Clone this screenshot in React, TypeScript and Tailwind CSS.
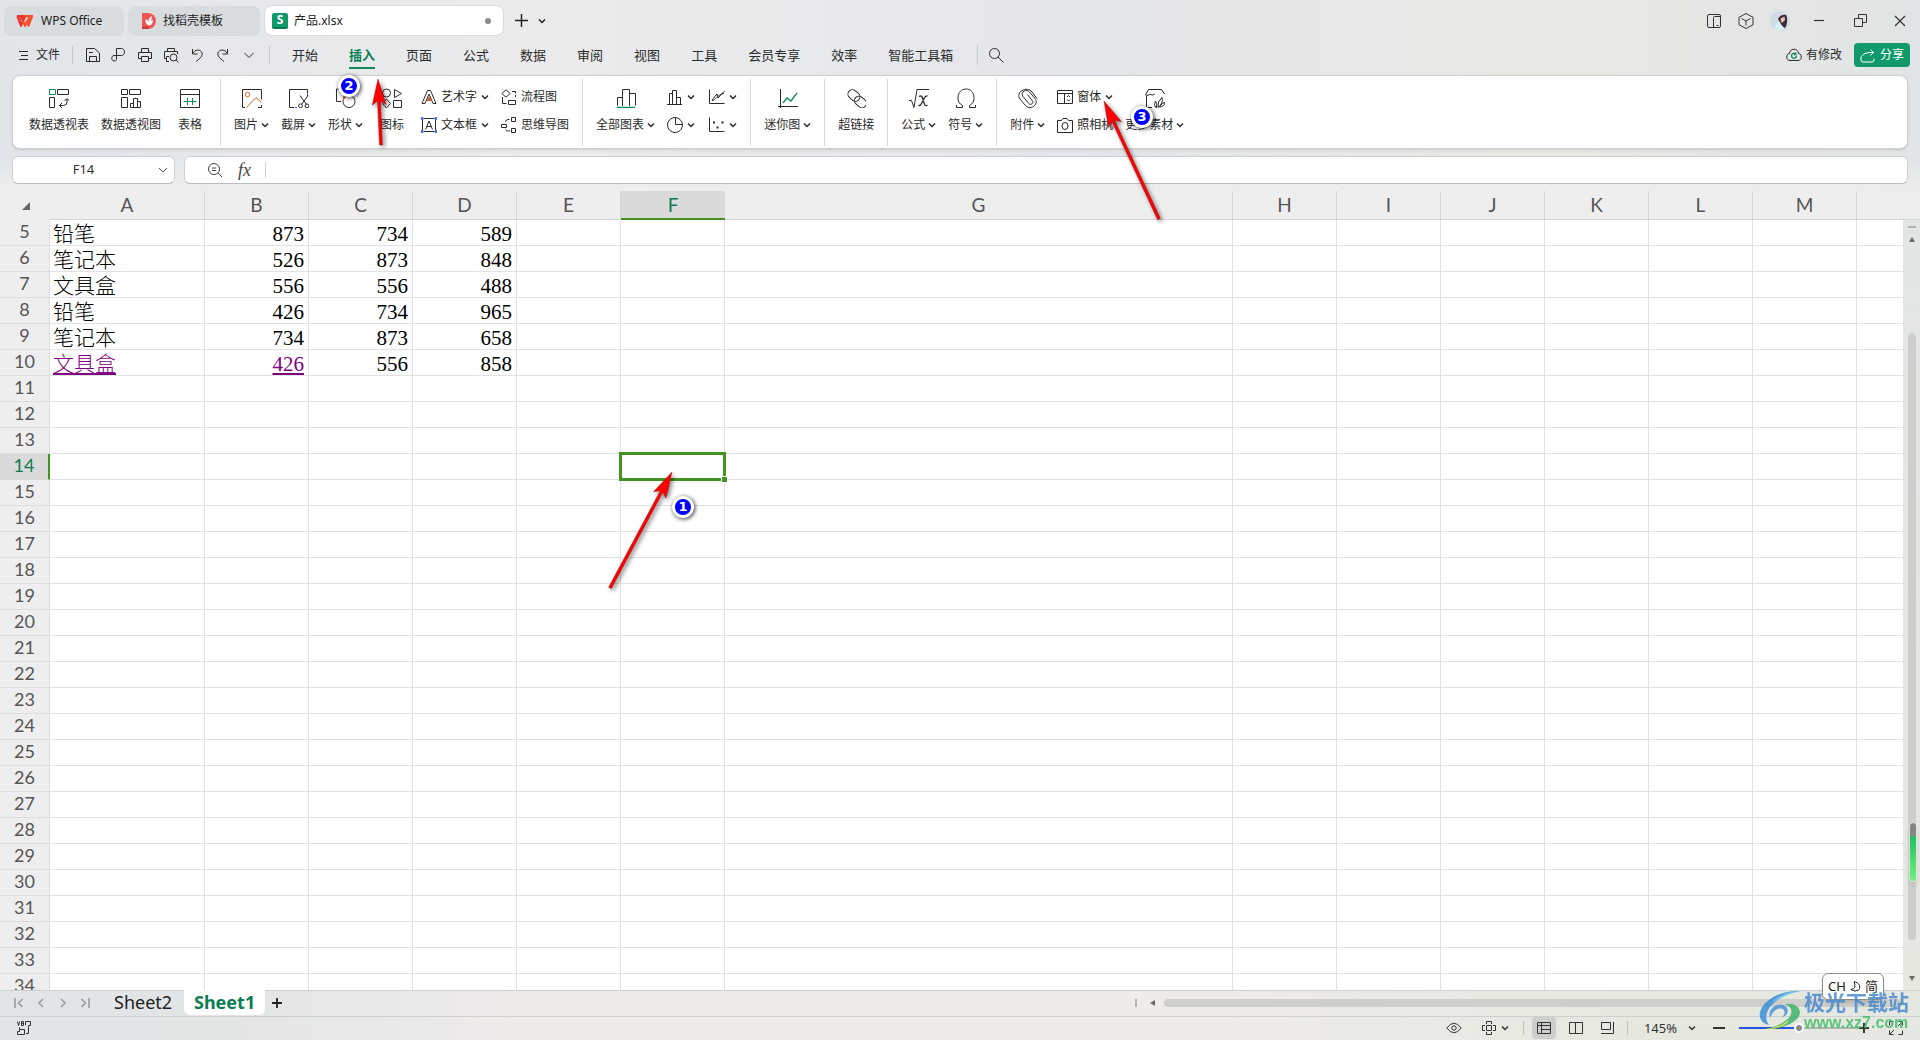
import { useState } from "react";
import type { ReactNode } from "react";

type IconProps = { size?: number; box?: number; className?: string; children: ReactNode };

function Icon({ size = 20, box = size, className = "", children }: IconProps) {
  return (
    <svg
      width={size}
      height={size}
      viewBox={`0 0 ${box} ${box}`}
      fill="none"
      stroke="currentColor"
      className={`shrink-0 ${className}`}
      aria-hidden="true"
    >
      {children}
    </svg>
  );
}

function Chevron() {
  return (
    <svg width="8" height="6" viewBox="0 0 8 6" fill="none" stroke="currentColor" strokeWidth="1.5" className="shrink-0" aria-hidden="true">
      <path d="M1 1.5l3 3 3-3" />
    </svg>
  );
}

const GREEN = "#0f8a5f";
const ORANGE = "#d0602c";
const BLUE = "#2a56dd";

const icons = {
  pivotTable: (
    <Icon>
      <path d="M8.5 1.5h11v5h-11zM.5 9.5h5v10h-5z" />
      <path d="M.5 1.5h6v5h-6z" stroke={GREEN} />
      <path d="M10.5 17.5h4q3.5 0 3.5-3.5v-3M13 15l-2.5 2.5L13 20M15.5 13L18 10.500l2.500 2.500" />
    </Icon>
  ),
  pivotChart: (
    <Icon>
      <path d="M.5 1.500h6v5h-6zM8.500 1.500h11v5h-11zM.5 9.500h6v10h-6zM9.500 19.500v-4h3v4M12.500 19.500v-9h4v9M16.500 13.500h3v6h-10" />
    </Icon>
  ),
  table: (
    <Icon>
      <path d="M.5 1.500h19v18H.5zM.5 6.500h19" />
      <path d="M3.500 13.500h13M7.500 10v7M12.500 10v7" stroke={GREEN} />
    </Icon>
  ),
  picture: (
    <Icon>
      <path d="M3 19.500H.5v-18h19v10M16 19.500h3.500V17" />
      <circle cx="5.500" cy="6.500" r="2.200" stroke={ORANGE} />
      <path d="M4.500 19.500L14 9.500l5.500 5" stroke={ORANGE} />
    </Icon>
  ),
  capture: (
    <Icon>
      <path d="M5 19.500H.5v-18h18v4" />
      <path d="M18.500 5.500v3M6 19.500h2" stroke={BLUE} />
      <path d="M11 7.500l6.500 9M19 7.500l-6.500 9" />
      <circle cx="11.500" cy="17.800" r="1.900" />
      <circle cx="18" cy="17.800" r="1.900" />
    </Icon>
  ),
  shapes: (
    <Icon>
      <path d="M5 13.500H.5V1H13" />
      <circle cx="13" cy="13.500" r="6" />
      <path d="M7.500 13V8.500h5" stroke={ORANGE} />
    </Icon>
  ),
  glyphs: (
    <Icon>
      <circle cx="4.500" cy="5" r="4" />
      <path d="M12.500 1.500l7 4-7 4zM4.500 11l4 4.500-4 4.500-4-4.500zM11.500 12.500h8v7h-8z" />
    </Icon>
  ),
  wordArt: (
    <Icon size={16}>
      <path d="M1 14.500L6.500 1.500h3L15 14.500h-3L8 5 4 14.500z" />
      <path d="M5.500 12L8 7l2.500 5z" fill={ORANGE} stroke="none" />
    </Icon>
  ),
  textBox: (
    <Icon size={16}>
      <path d="M3 1.500h10M3 14.500h10M1.500 3v10M14.500 3v10M4.500 12.500L8 4l3.500 8.500M5.700 9.500h4.600" />
      <path d="M0 1.500h2.500M0 14.500h2.500M13.500 1.500H16M13.500 14.500H16" stroke={BLUE} strokeWidth="2.500" />
    </Icon>
  ),
  flowChart: (
    <Icon size={16}>
      <path d="M5 .8L9.200 4.500 5 8.200.8 4.500zM1.500 8v6.500h4M11 2.500h3.500v2M14.500 6v2" />
      <path d="M7.500 11.500h7v4h-7z" />
    </Icon>
  ),
  mindMap: (
    <Icon size={16}>
      <path d="M.5 7.500h5v3h-5zM10.500.5h4v4h-4zM10.500 11.500h4v4h-4zM8.500 2.500H7Q5 2.500 4.500 5M4.500 12.500q.5 1.500 2.500 1.500h2" />
    </Icon>
  ),
  allCharts: (
    <Icon>
      <path d="M1.500 17.500v-8h5M6.500 18V1.500h7V18M13.500 5.500h6v12" />
      <path d="M1 19.500h18" stroke={GREEN} strokeWidth="1.500" />
    </Icon>
  ),
  barChart: (
    <Icon size={16}>
      <path d="M0 15.500h15M2.500 15V4.500h3M5.500 15V1.500h4V15M9.500 8.500h4V15" />
    </Icon>
  ),
  lineChart: (
    <Icon size={16}>
      <path d="M.5.5v14h15M3 11l5-6 1 4 6.500-7M3 11.500c4 0 5-6 12-7" />
    </Icon>
  ),
  pieChart: (
    <Icon size={16}>
      <circle cx="8" cy="8" r="7.500" />
      <path d="M8.500.5v7h7" />
    </Icon>
  ),
  scatter: (
    <Icon size={16}>
      <path d="M.5.5v14h15" />
      <path d="M4 5.500h2M7.500 10.500h2M12.500 5.500h2" strokeWidth="2" />
    </Icon>
  ),
  sparkline: (
    <Icon>
      <path d="M2.500 1v20M0 18.500h20" />
      <path d="M5 15l4-5 4 3 6-8" stroke={GREEN} strokeWidth="1.300" />
    </Icon>
  ),
  link: (
    <Icon>
      <rect x="-3" y="-5" width="13" height="9" rx="4.500" transform="translate(5 5.500) rotate(42)" />
      <rect x="-3" y="-5" width="13" height="9" rx="4.500" transform="translate(11.500 12) rotate(42)" />
    </Icon>
  ),
  formula: (
    <Icon>
      <path d="M0 12.500h2.500l2.500 7 3-18h12" />
      <path d="M10 8.500q2.500-1.500 3.500 1.500l2 6.500q1 2 3 .5M18.500 8q-2-.5-4 3.500l-2 4q-1.500 3-3 1.500" strokeWidth="1.300" />
    </Icon>
  ),
  omega: (
    <Icon>
      <path d="M.5 17v2.500h6v-2A9 8.500 0 0 1 2 9.500C2 4.500 5.500 1 10 1s8 3.500 8 8.500a9 8.500 0 0 1-4.500 8v2h6V17" />
    </Icon>
  ),
  clip: (
    <Icon>
      <path d="M19 10.500l-5-6.500C11.500 1 7.500.5 4 2.500.5 4.500 0 8 2 11l5 6c2 2.500 5.500 3.500 8.500 1.500s3.500-5.500 1.500-8L11.500 4c-1.500-1.500-3.500-2-5.500-.8S3.500 6.500 5 8.500l5.500 6.700c1 1.300 2.500 1.500 3.500.6s1.200-2 .2-3.300L9.500 6.500" />
    </Icon>
  ),
  form: (
    <Icon size={16}>
      <path d="M.5 1.500h15v13H.5zM.5 4.500h15M7.500 4.500v10M10 8l1.500-1.500L13 8M10 10.500l1.500 1.500 1.500-1.500" />
    </Icon>
  ),
  camera: (
    <Icon size={16}>
      <path d="M.5 3.500h4l1.500-2h4l1.500 2h4v12H.5z" />
      <ellipse cx="8" cy="9" rx="3" ry="3.500" />
    </Icon>
  ),
  more: (
    <Icon>
      <path d="M7 19.500H1.500V8M.5 7L3.500 1.500h13L19.500 6M.5 7q2.500 1.500 4.500-1 2 2.500 4.500 0" />
      <path d="M10.500 19.500q-2-2.500 0-6.500 2 2 1 6.500zM13 19.500q-1-6 4-10 1.500 6-4 10zM14.500 19q3-5 5.500-4.500-.5 4-5.500 4.500z" />
    </Icon>
  ),
};

function BigButton({ icon, label, menu }: { icon: ReactNode; label: string; menu?: boolean }) {
  return (
    <button className="flex min-w-[46px] flex-col items-center gap-2 px-[6px] pt-[12px] text-[#2b2b2b]">
      {icon}
      <span className="flex items-center gap-[3px] text-xs leading-[18px] whitespace-nowrap">
        {label}
        {menu && <Chevron />}
      </span>
    </button>
  );
}

function SmallButton({ icon, label, menu, name }: { icon: ReactNode; label?: string; menu?: boolean; name?: string }) {
  return (
    <button className="flex h-4 items-center gap-1 text-xs leading-4 whitespace-nowrap text-[#2b2b2b]" aria-label={name}>
      {icon}
      {label}
      {menu && <Chevron />}
    </button>
  );
}

function Divider() {
  return <div className="mx-[7px] mt-[3px] h-[67px] w-px bg-[#d5d7d9]" />;
}

function TitleBar() {
  return (
    <header className="flex h-[41px] items-center pl-1 text-xs text-[#222]">
      <button className="flex h-[30px] w-[120px] items-center gap-2 rounded-lg bg-[#d9dcdf] pl-3">
        <svg width="17" height="12" viewBox="0 0 17 12" fill="none" strokeWidth="2.400" aria-hidden="true">
          <path d="M1 1.200h5l-1 4M1.500 1.200l3.500 9 4-9h-3" stroke="#f0302c" />
          <path d="M7 6l2 4.300 5.500-9M9 1.200h7l-3.500 9-2-4" stroke="#f4502e" />
        </svg>
        WPS Office
      </button>
      <button className="ml-1 flex h-[30px] w-[132px] items-center gap-[7px] rounded-lg bg-[#d9dcdf] pl-[14px]">
        <svg width="14" height="16" viewBox="0 0 14 16" aria-hidden="true">
          <path d="M0 0h6a7.500 7.500 0 0 1 0 16H0z" fill="#f25555" />
          <path d="M0 13.500h8L6 16H0z" fill="#c93d3d" />
          <path d="M7 12.500C3.500 11 3 8 4 6c1.500 1 2.200 2 2.500 3 0-2.500.5-4.500 3-6 .5 2 .2 3.500-.8 5 .8-.6 1.300-.8 2.300-.8 0 3-1.500 5-4 5.300z" fill="#fff" />
        </svg>
        找稻壳模板
      </button>
      <div className="ml-1 flex h-[31px] w-[240px] items-center rounded-lg border border-[#d8dadc] bg-white pr-3 pl-[7px]">
        <span className="flex h-4 w-4 items-center justify-center rounded-xs border-b-2 border-[#0b7a50] bg-[#12996b] text-xs font-bold text-white">
          S
        </span>
        <span className="ml-[6px] flex-1">产品.xlsx</span>
        <span className="h-[6px] w-[6px] rounded-full bg-[#8c8c8c]" />
      </div>
      <button className="ml-[10px]" aria-label="新建">
        <Icon size={15}><path d="M7.500 1v13M1 7.500h13" strokeWidth="1.500" /></Icon>
      </button>
      <button className="ml-[9px]" aria-label="标签列表"><Chevron /></button>
      <div className="ml-auto flex h-full items-center text-[#333]">
        <button className="flex w-8 justify-center" aria-label="分屏">
          <Icon size={16}>
            <rect x="1.500" y="1.500" width="13" height="13" rx="1.500" />
            <path d="M7.500 13V4.500q0-1 1-1h6M7.500 13v1.500M10.500 12.500h2" />
          </Icon>
        </button>
        <button className="flex w-8 justify-center" aria-label="应用中心">
          <Icon size={16}><path d="M8 .5l7 3.800v7.400l-7 3.800-7-3.800V4.300zM3.500 5.500L8 8l4.500-2.500M8 8v4.500" /></Icon>
        </button>
        <button className="flex w-9 justify-center" aria-label="账号">
          <svg width="20" height="20" viewBox="0 0 20 20" aria-hidden="true">
            <circle cx="10" cy="10" r="10" fill="#cfdae4" />
            <path d="M5 18c-1-4 1-7 5-7l4 7q-4 3-9 0z" fill="#dbeef5" />
            <path d="M8 8q3-5 8-4 1.500 2 1 7-.5 5-2.500 6l-3-3z" fill="#3b2a33" />
            <path d="M10.500 7.500l4-2 .5 3.500-3 3q-1.500-2-1.500-4.500z" fill="#e9c3b6" />
          </svg>
        </button>
        <button className="flex w-[42px] justify-center" aria-label="最小化">
          <Icon size={12}><path d="M1 5.500h10" strokeWidth="1.200" /></Icon>
        </button>
        <button className="flex w-10 justify-center" aria-label="还原">
          <Icon size={13}><path d="M.5 4.500h8v8h-8zM4.500 4V.5h8v8H9" /></Icon>
        </button>
        <button className="flex w-10 justify-center" aria-label="关闭">
          <Icon size={12}><path d="M1 1l10 10M11 1L1 11" strokeWidth="1.200" /></Icon>
        </button>
      </div>
    </header>
  );
}

const quickTools = [
  { name: "保存", icon: <path d="M1.500 1.500h8l5 4.500v8.500h-13zM4.500 14v-4.500h7V14M4 5.500h4" /> },
  { name: "输出为PDF", icon: <path d="M5.500 11V1.500h5c4 0 4 7 0 7H3c-3 0-3 5.500 0 5.500 2.500 0 2.500-1 2.500-3" /> },
  { name: "打印", icon: <path d="M4.500 5V1.500h7V5M4 11.500H1.500v-6h13v6H12M4.500 9.500h7v5h-7z" /> },
  {
    name: "打印预览",
    icon: (
      <>
        <path d="M4.500 4.500v-3h7v3M3.500 11.500h-2v-7h13V7M6 14.500H3.500v-5H6" />
        <circle cx="10.500" cy="10.500" r="3.500" />
        <path d="M13 13l2.500 2.500" />
      </>
    ),
  },
  { name: "撤销", icon: <path d="M3.500 2v5h5M3.500 6.500C6 2 12 2 13 6c.8 3-1.500 5-6 8.500" /> },
  { name: "恢复", icon: <path d="M12.500 2v5h-5M12.500 6.500C10 2 4 2 3 6c-.8 3 1.500 5 6 8.500" /> },
  { name: "自定义", icon: <path d="M3.500 6l4.500 4.500L12.500 6" /> },
];

const menuTabs = ["开始", "插入", "页面", "公式", "数据", "审阅", "视图", "工具", "会员专享", "效率", "智能工具箱"];

function MenuBar() {
  const [active, setActive] = useState("插入");

  return (
    <div className="flex h-[28px] items-center pr-[10px] pl-[18px] text-[#2b2b2b]">
      <button className="flex items-center gap-[7px] text-xs">
        <Icon size={11}><path d="M1 1.500h9M3 5.500h7M1 9.500h9" /></Icon>
        文件
      </button>
      <div className="mr-[7px] ml-3 h-[18px] w-px bg-[#c3c6ca]" />
      {quickTools.map((tool) => (
        <button key={tool.name} className="flex w-[26px] justify-center" aria-label={tool.name}>
          <Icon size={16}>{tool.icon}</Icon>
        </button>
      ))}
      <div className="ml-[7px] h-[18px] w-px bg-[#c3c6ca]" />
      <nav className="ml-[22px] flex gap-[31px] text-[13px]">
        {menuTabs.map((tab) => (
          <button
            key={tab}
            onClick={() => setActive(tab)}
            className={`h-[28px] border-y-2 border-t-transparent leading-6 whitespace-nowrap ${
              tab === active ? "border-b-[#0f8a5f] font-bold text-[#0a7d54]" : "border-b-transparent"
            }`}
          >
            {tab}
          </button>
        ))}
      </nav>
      <div className="ml-6 h-5 w-px bg-[#c3c6ca]" />
      <button className="ml-[10px]" aria-label="搜索">
        <Icon size={16}>
          <circle cx="6.500" cy="6.500" r="5" />
          <path d="M10 10l5.500 5.500" />
        </Icon>
      </button>
      <button className="ml-auto flex items-center gap-1 text-xs">
        <Icon size={16}>
          <path d="M4 13.500C-.5 13.500-.2 6.500 3.500 6.500 4 .8 12 .8 12.500 6.500c3.700 0 4 7-.5 7z" />
          <path d="M9 5.500l1 1.500-2 .8M10.500 8.500a2.500 2.500 0 1 1-1.500-2" stroke={GREEN} strokeWidth="1.300" />
        </Icon>
        有修改
      </button>
      <button className="ml-3 flex h-6 w-14 items-center justify-center gap-[5px] rounded bg-[#12996b] text-xs text-white">
        <Icon size={15}><path d="M1 8.500V12q0 2 2 2h9q2 0 2-2v-1.500M1.500 8.500Q4 4 13.500 4.500M10.500 1.500l3 3-3 3" /></Icon>
        分享
      </button>
    </div>
  );
}

function Ribbon() {
  return (
    <div className="mx-3 mt-[6px] flex h-[74px] items-start rounded-lg border border-[#cfd2d4] bg-white pl-[10px] shadow-sm">
      <BigButton icon={icons.pivotTable} label="数据透视表" />
      <BigButton icon={icons.pivotChart} label="数据透视图" />
      <BigButton icon={icons.table} label="表格" />
      <Divider />
      <BigButton icon={icons.picture} label="图片" menu />
      <BigButton icon={icons.capture} label="截屏" menu />
      <BigButton icon={icons.shapes} label="形状" menu />
      <BigButton icon={icons.glyphs} label="图标" />
      <div className="mx-[6px] grid grid-cols-[auto_auto] gap-x-3 gap-y-3 pt-[13px]">
        <SmallButton icon={icons.wordArt} label="艺术字" menu />
        <SmallButton icon={icons.flowChart} label="流程图" />
        <SmallButton icon={icons.textBox} label="文本框" menu />
        <SmallButton icon={icons.mindMap} label="思维导图" />
      </div>
      <Divider />
      <BigButton icon={icons.allCharts} label="全部图表" menu />
      <div className="mx-[6px] grid grid-cols-[auto_auto] gap-x-[14px] gap-y-3 pt-[13px]">
        <SmallButton icon={icons.barChart} name="柱形图" menu />
        <SmallButton icon={icons.lineChart} name="折线图" menu />
        <SmallButton icon={icons.pieChart} name="饼图" menu />
        <SmallButton icon={icons.scatter} name="散点图" menu />
      </div>
      <Divider />
      <BigButton icon={icons.sparkline} label="迷你图" menu />
      <Divider />
      <BigButton icon={icons.link} label="超链接" />
      <Divider />
      <BigButton icon={icons.formula} label="公式" menu />
      <BigButton icon={icons.omega} label="符号" menu />
      <Divider />
      <BigButton icon={icons.clip} label="附件" menu />
      <div className="mx-[6px] flex flex-col gap-3 pt-[13px]">
        <SmallButton icon={icons.form} label="窗体" menu />
        <SmallButton icon={icons.camera} label="照相机" />
      </div>
      <BigButton icon={icons.more} label="更多素材" menu />
    </div>
  );
}

function FormulaBar() {
  return (
    <div className="flex gap-[9px] bg-linear-to-b from-transparent from-30% to-[#eee] px-3 py-[7px]">
      <div className="flex h-7 w-[163px] items-center rounded-md border border-[#cfd2d4] border-b-[#b8bcbc] bg-white pr-[6px] text-[#555]">
        <input aria-label="名称框" defaultValue="F14" className="w-full min-w-0 pr-1 text-center text-[13px] text-[#333] outline-none" />
        <Icon size={10}><path d="M1 3l4 4 4-4" /></Icon>
      </div>
      <div className="flex h-7 flex-1 items-center rounded-md border border-[#cfd2d4] border-b-[#b8bcbc] bg-white pl-[22px] text-[#444]">
        <Icon size={16}>
          <circle cx="7" cy="7" r="5.500" />
          <path d="M11 11l4 4M5 6h4M5 8.500h4" />
        </Icon>
        <span className="ml-[15px] font-['Liberation_Serif',serif] text-lg leading-5 italic">fx</span>
        <div className="ml-[14px] h-4 w-px bg-[#cfd2d4]" />
        <input aria-label="编辑栏" className="h-full flex-1 px-2 text-[13px] outline-none" />
      </div>
    </div>
  );
}

const columns = ["A", "B", "C", "D", "E", "F", "G", "H", "I", "J", "K", "L", "M"];
const rowNumbers = Array.from({ length: 30 }, (_, i) => i + 5);

const sheetData: Record<number, string[]> = {
  5: ["铅笔", "873", "734", "589"],
  6: ["笔记本", "526", "873", "848"],
  7: ["文具盒", "556", "556", "488"],
  8: ["铅笔", "426", "734", "965"],
  9: ["笔记本", "734", "873", "658"],
  10: ["文具盒", "426", "556", "858"],
};

function Cell({ row, col }: { row: number; col: string }) {
  const index = columns.indexOf(col);
  const value = sheetData[row]?.[index];
  const selected = row === 14 && col === "F";
  const linked = row === 10 && index < 2;

  return (
    <td
      className={`border-r border-b border-[#e1e2e3] pt-[3px] pr-1 pl-[3px] leading-[22px] whitespace-nowrap ${
        index > 0 ? "text-right" : ""
      } ${selected ? "relative" : ""}`}
    >
      {linked ? (
        <a href="#sheet" className="text-[#800080] underline decoration-2 underline-offset-2">{value}</a>
      ) : (
        value
      )}
      {selected && (
        <>
          <span className="absolute -top-[2px] -right-[2px] -bottom-[2px] -left-[2px] border-[3px] border-[#449320]" />
          <span className="absolute -right-[3px] -bottom-[3px] h-[6px] w-[6px] border-t border-l border-white bg-[#449320]" />
        </>
      )}
    </td>
  );
}

function Grid() {
  return (
    <main className="flex min-h-0 flex-1">
      <div className="min-w-0 flex-1 overflow-hidden bg-white">
        <table className="w-full table-fixed border-separate border-spacing-0">
          <colgroup>
            <col className="w-[50px]" />
            <col className="w-[155px]" />
            {columns.slice(1).map((col) => (
              <col key={col} className={col === "G" ? "w-[508px]" : "w-[104px]"} />
            ))}
            <col />
          </colgroup>
          <thead className="font-['Lato',sans-serif] text-[19px] text-[#555]">
            <tr className="h-[29px]">
              <th className="bg-[#eee]" aria-label="全选">
                <svg width="8" height="8" viewBox="0 0 8 8" className="ml-[22px]" aria-hidden="true">
                  <path d="M8 0v8H0z" fill="#666" />
                </svg>
              </th>
              {columns.map((col) => (
                <th
                  key={col}
                  scope="col"
                  className={`p-0 font-normal leading-[26px] ${
                    col === "F"
                      ? "border-b-2 border-b-[#449320] bg-[#dadada] text-[#0a7d54]"
                      : "border-r border-b border-[#d5d6d7] bg-[#eee]"
                  }`}
                >
                  {col}
                </th>
              ))}
              <th className="border-b border-[#d5d6d7] bg-[#eee]" />
            </tr>
          </thead>
          <tbody className="font-['Liberation_Serif','Noto_Sans_CJK_SC',serif] text-[21px] font-light text-black">
            {rowNumbers.map((row) => (
              <tr key={row} className="h-[26px]">
                <th
                  scope="row"
                  className={`p-0 pb-[3px] font-['Lato','Noto_Sans',sans-serif] text-lg leading-[22px] font-normal ${
                    row === 14
                      ? "border-r-2 border-b border-r-[#449320] border-b-[#dcdddd] bg-[#dadada] text-[#0a7d54]"
                      : "border-r border-b border-[#dcdddd] bg-[#eee] text-[#555]"
                  }`}
                >
                  {row}
                </th>
                {columns.map((col) => (
                  <Cell key={col} row={row} col={col} />
                ))}
                <td className="border-b border-[#e1e2e3]" />
              </tr>
            ))}
          </tbody>
        </table>
      </div>
      <div className="flex w-[17px] flex-col">
        <div className="h-[29px] border-b border-[#d5d6d7] bg-[#eee]" />
        <div className="flex min-h-0 flex-1 flex-col items-center bg-linear-to-b from-[#e2e5e6] to-[#e6e8e0] pt-[6px] pb-[9px] text-[#6b6b6b]">
          <div className="h-[2px] w-2 bg-[#b3b5b5]" />
          <svg width="6" height="5" viewBox="0 0 6 5" className="mt-[9px]" aria-hidden="true"><path d="M3 0l3 5H0z" fill="currentColor" /></svg>
          <div className="mt-[91px] mb-[36px] w-2 flex-1 rounded-full bg-[#cdcfca]" />
          <svg width="6" height="5" viewBox="0 0 6 5" aria-hidden="true"><path d="M3 5l3-5H0z" fill="currentColor" /></svg>
        </div>
      </div>
    </main>
  );
}

function SheetBar() {
  return (
    <div className="flex h-[27px] items-start border-t border-b border-[#cdd0d1] text-[#9a9c9e]">
      <div className="flex h-6 items-center gap-[12px] pl-[14px]">
        <button aria-label="第一张"><Icon size={10}><path d="M1 0v10M8.500 1l-4 4 4 4" strokeWidth="1.600" /></Icon></button>
        <button aria-label="上一张"><Icon size={10}><path d="M7 1L3 5l4 4" strokeWidth="1.600" /></Icon></button>
        <button aria-label="下一张"><Icon size={10}><path d="M3 1l4 4-4 4" strokeWidth="1.600" /></Icon></button>
        <button aria-label="最后一张"><Icon size={10}><path d="M9 0v10M1.500 1l4 4-4 4" strokeWidth="1.600" /></Icon></button>
      </div>
      <button className="ml-[24px] h-[22px] text-lg leading-[22px] text-[#222]">Sheet2</button>
      <button className="ml-3 -mt-px h-[25px] w-[81px] rounded-b-md bg-white pb-[2px] text-lg leading-[22px] font-bold text-[#0a7d54]">Sheet1</button>
      <button className="ml-[7px] flex h-6 items-center text-[#222]" aria-label="新建工作表">
        <Icon size={10}><path d="M5 0v10M0 5h10" strokeWidth="1.800" /></Icon>
      </button>
      <div className="ml-auto flex h-6 w-[785px] items-center pr-[17px] text-[#6b6b6b]">
        <div className="h-2 w-[2px] bg-[#b3b5b5]" />
        <svg width="5" height="6" viewBox="0 0 5 6" className="mr-[9px] ml-[13px]" aria-hidden="true"><path d="M0 3l5-3v6z" fill="currentColor" /></svg>
        <div className="h-2 flex-1 rounded-full bg-[#cfceca]" />
      </div>
    </div>
  );
}

function StatusBar() {
  return (
    <footer className="flex h-[23px] items-center pb-px pl-[17px] text-[#333]">
      <button aria-label="宏">
        <Icon size={14}><path d="M.5.5l1 4 1-4M4.500.5h2v4h-2zM4.500 2.500h2M8.500 4V.5h5v4h-2v8H9M2.500 8.500h5v5h-7v-3h2zM2.500 8.500v-2" /></Icon>
      </button>
      <button className="ml-auto" aria-label="护眼模式">
        <Icon size={16}>
          <path d="M.8 8Q8-1.500 15.200 8 8 17.500.8 8z" />
          <circle cx="8" cy="8" r="2.200" />
        </Icon>
      </button>
      <button className="ml-5 flex items-center gap-[5px]" aria-label="阅读模式">
        <Icon size={14}><path d="M4.500 3V.5h5V3M4.500 11v2.500h5V11M3 4.500H.5v5H3M11 4.500h2.500v5H11M4.500 4.500h5v5h-5z" /></Icon>
        <Chevron />
      </button>
      <div className="mr-2 ml-[14px] h-[14px] w-px bg-[#c3c4c2]" />
      <button className="flex h-[22px] w-6 items-center justify-center rounded bg-[#cdcfcb]" aria-label="普通视图">
        <Icon size={14}><path d="M.5 1.500h13v11H.5zM.5 4.500h13M4.500 1.500v11M4.500 8.500h9" /></Icon>
      </button>
      <button className="ml-[13px]" aria-label="页面布局">
        <Icon size={14}><path d="M.5 1.500h13v11H.5zM6.500 1.500v11" /></Icon>
      </button>
      <button className="ml-[18px]" aria-label="分页预览">
        <Icon size={14}><path d="M.5 1.500h9v7h-9zM12.500 1v11.500H0" /></Icon>
      </button>
      <div className="ml-3 h-[14px] w-px bg-[#c3c4c2]" />
      <button className="ml-4 flex items-center gap-[11px] text-[13px] leading-5 whitespace-nowrap">
        145% <Chevron />
      </button>
      <button className="ml-[17px]" aria-label="缩小">
        <Icon size={12}><path d="M0 6h12" strokeWidth="2" /></Icon>
      </button>
      <input
        type="range"
        aria-label="显示比例"
        defaultValue={50}
        className="ml-[14px] h-[2px] w-[120px] appearance-none bg-linear-to-r from-[#2453e0] from-50% to-[#b4b5b2] to-50% [&::-webkit-slider-thumb]:h-[10px] [&::-webkit-slider-thumb]:w-[10px] [&::-webkit-slider-thumb]:appearance-none [&::-webkit-slider-thumb]:rounded-full [&::-webkit-slider-thumb]:border-2 [&::-webkit-slider-thumb]:border-white [&::-webkit-slider-thumb]:bg-[#8b8b8b]"
      />
      <button aria-label="放大">
        <Icon size={10}><path d="M5 0v10M0 5h10" strokeWidth="2" /></Icon>
      </button>
      <button className="mr-[17px] ml-[20px]" aria-label="全屏">
        <Icon size={14}><path d="M.5 4.500v-4h4M9.500.5h4v4M13.500 9.500v4h-4M4.500 13.500h-4v-4M9 5l4-4M5 9l-4 4" /></Icon>
      </button>
    </footer>
  );
}

// red pointer drawn from its tail to its tip, head included
function Arrow({ from, to }: { from: [number, number]; to: [number, number] }) {
  const length = Math.hypot(to[0] - from[0], to[1] - from[1]);
  const angle = (Math.atan2(to[1] - from[1], to[0] - from[0]) * 180) / Math.PI;
  return (
    <g transform={`translate(${to[0]} ${to[1]}) rotate(${angle})`} fill="#fe0000" stroke="#8e1414" strokeWidth="0.400">
      <path d={`M0 0L-26 7L-22 1.500H${-length}V-1.500H-22L-26 -7Z`} />
    </g>
  );
}

function Badge({ label, className }: { label: string; className: string }) {
  return (
    <span
      className={`absolute flex h-[22px] w-[22px] items-center justify-center rounded-full border-[3px] border-white bg-[#0000fe] font-['DejaVu_Sans',sans-serif] text-[13px] leading-3 font-bold text-white shadow-[1px_1px_4px_rgba(0,0,0,0.8)] ${className}`}
    >
      {label}
    </span>
  );
}

function Annotations() {
  return (
    <div className="pointer-events-none absolute inset-0">
      <svg width="1200" height="620" viewBox="0 0 1200 620" className="drop-shadow-[2px_2px_2px_rgba(0,0,0,0.5)]" aria-hidden="true">
        <Arrow from={[381, 145]} to={[378, 79]} />
        <Arrow from={[610, 588]} to={[672, 472]} />
        <Arrow from={[1159, 219]} to={[1104, 101]} />
      </svg>
      <Badge label="1" className="top-[496px] left-[672px]" />
      <Badge label="2" className="top-[75px] left-[338px]" />
      <Badge label="3" className="top-[106px] left-[1131px]" />
      <div className="absolute right-0 bottom-[158px] mr-[3px] h-[60px] w-2 rounded border border-[#dfe5df] bg-linear-to-b from-[#858585] from-20% via-[#1fc063] via-25% to-[#6cf07c] shadow-md" />
      <div className="absolute right-[36px] bottom-[40px] flex h-[27px] w-[62px] items-center justify-center gap-1 rounded-md border border-[#8c8c8c] bg-white text-[13px] text-[#222] shadow-md">
        CH
        <Icon size={11}><path d="M4 .8c5 .5 7 4.500 5 8Q5 11.500.8 8.500 7 8 4 .8z" /></Icon>
        简
      </div>
      <div className="absolute right-[11px] bottom-[8px] flex items-center opacity-85">
        <svg width="46" height="42" viewBox="0 0 46 42" aria-hidden="true">
          <path d="M42 1C26 0 6 8 2 22c-1.500 7 3 12 9 13C6 29 8 19 17 12 24 6 32 3 42 1z" fill="#3a8fd6" />
          <path d="M42 1C30 1 18 7 13 14 20 8 32 3 42 1z" fill="#62c6ee" />
          <path d="M12 28C9 20 17 13 25 15c7 2 6 11-1 12 4-3 3-8-1-8.500-5-.5-9 4-11 9.500z" fill="#4a93d4" />
          <path d="M27 14c8-1 15 2 15 9C41 32 24 40 6 39c12-2 24-7 27-15 1.500-4-1-8-6-10z" fill="#3fb56a" />
          <path d="M6 39c10-1 20-4 26-10-3 7-14 11-26 10z" fill="#cddd4a" />
        </svg>
        <div className="flex flex-col">
          <span className="text-[21px] leading-6 font-bold text-[#4a8bcf]">极光下载站</span>
          <span className="font-['Liberation_Sans',sans-serif] text-base leading-[18px] font-bold text-[#46bd6c]">www.xz7.com</span>
        </div>
      </div>
    </div>
  );
}

export default function App() {
  return (
    <div className="relative flex h-screen flex-col overflow-hidden bg-[#eee] font-['Noto_Sans','Noto_Sans_CJK_SC',sans-serif]">
      <div className="bg-[linear-gradient(to_right,#e1e5e9,#ebebec_28%,#e3e6ea_57%,#e8e9e2_80%,#e1e4e6)]">
        <TitleBar />
        <MenuBar />
        <Ribbon />
        <FormulaBar />
      </div>
      <Grid />
      <div className="bg-[linear-gradient(to_right,#e0e5e7,#e2e5e6_12%,#efebe9_27%,#efebe9_63%,#e6e8df_85%,#e5e8e1)]">
        <SheetBar />
        <StatusBar />
      </div>
      <Annotations />
    </div>
  );
}
